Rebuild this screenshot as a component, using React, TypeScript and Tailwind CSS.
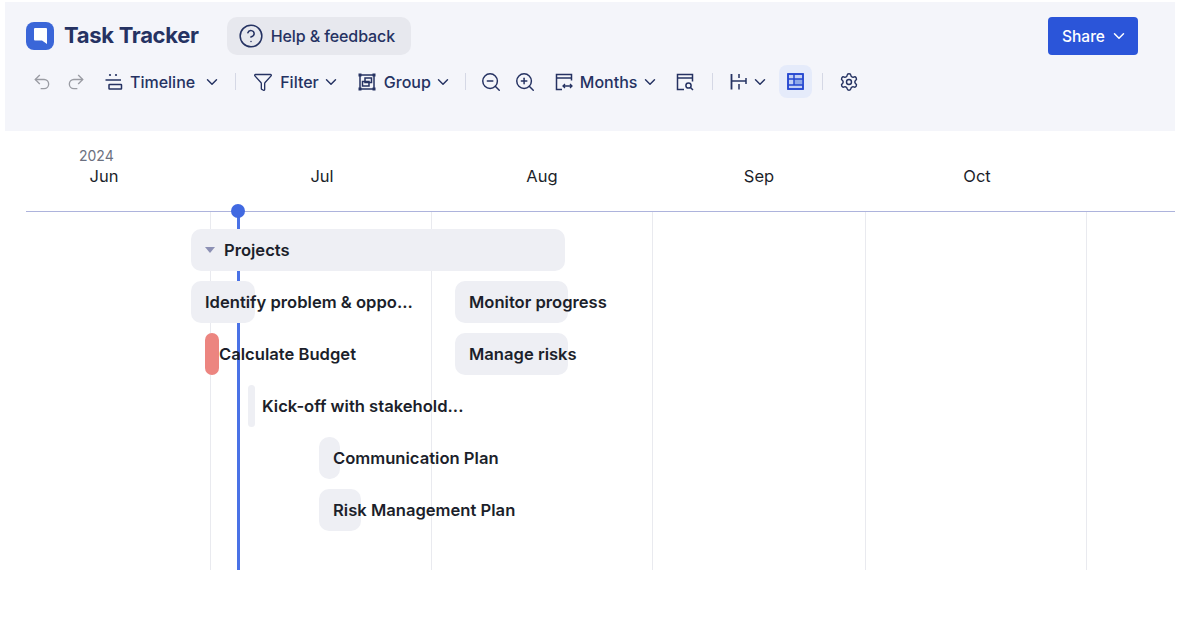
import { ChevronDown, CircleHelp, Funnel, Redo2, Settings, Undo2, ZoomIn, ZoomOut } from 'lucide-react';

const navy = 'text-[#253262]';

function TimelineIcon() {
  return (
    <svg width="18" height="18" viewBox="0 0 18 18" fill="none" stroke="currentColor" strokeWidth="1.5">
      <circle cx="5" cy="2" r="1.1" fill="currentColor" stroke="none" />
      <circle cx="11" cy="2" r="1.1" fill="currentColor" stroke="none" />
      <path d="M0.5 7h15.5" />
      <rect x="4" y="11.5" width="12.5" height="4.5" rx="0.5" />
    </svg>
  );
}

function GroupIcon() {
  return (
    <svg width="18" height="18" viewBox="0 0 18 18" fill="none" stroke="currentColor" strokeWidth="1.5">
      <rect x="2" y="2" width="14" height="14" />
      <rect x="7" y="5" width="6.5" height="4.5" />
      <rect x="4.5" y="8.5" width="6.5" height="4.5" />
      <g fill="currentColor" stroke="none">
        <rect x="0.5" y="0.5" width="3" height="3" />
        <rect x="14.5" y="0.5" width="3" height="3" />
        <rect x="0.5" y="14.5" width="3" height="3" />
        <rect x="14.5" y="14.5" width="3" height="3" />
      </g>
    </svg>
  );
}

function MonthsIcon() {
  return (
    <svg width="18" height="18" viewBox="0 0 18 18" fill="none" stroke="currentColor" strokeWidth="1.5">
      <path d="M7 16.5H1.5V1.5h15v6" />
      <path d="M1.5 5h15" />
      <path d="M8 13h9M10 11l-2 2 2 2M15 11l2 2-2 2" strokeWidth="1.3" />
    </svg>
  );
}

function CalendarSearchIcon() {
  return (
    <svg width="18" height="18" viewBox="0 0 18 18" fill="none" stroke="currentColor" strokeWidth="1.5">
      <path d="M8 16.5H1.5V1.5h15v7" />
      <path d="M1.5 5h15" />
      <circle cx="12.5" cy="12.5" r="2.6" />
      <path d="M14.5 14.5l2.5 2.5" />
    </svg>
  );
}

function ColumnsIcon() {
  return (
    <svg width="18" height="18" viewBox="0 0 18 18" fill="none" stroke="currentColor" strokeWidth="1.5">
      <path d="M1.5 1v15.5" strokeWidth="1.8" />
      <path d="M1.5 8h14.5" />
      <path d="M9 1v4M9 11v5.5" />
      <path d="M16 5v6" />
    </svg>
  );
}

function TableIcon() {
  return (
    <svg width="17" height="17" viewBox="0 0 17 17" fill="none">
      <rect x="1" y="1" width="15" height="15" fill="#c3d0f5" stroke="#2447d0" strokeWidth="1.5" />
      <rect x="7" y="6" width="9" height="6" fill="#8fa8e8" />
      <path d="M1 6h15M1 12h15M7 1v11" stroke="#2447d0" strokeWidth="1.5" />
      <rect x="1" y="1" width="15" height="15" stroke="#2447d0" strokeWidth="1.5" />
    </svg>
  );
}

function Divider() {
  return <div className="h-[17px] w-px bg-[#d5d8e5]" />;
}

function Bar({ left, top, width, color = 'bg-[#eeeff4]', label, textLeft }: {
  left: number;
  top: number;
  width: number;
  color?: string;
  label: string;
  textLeft: number;
}) {
  return (
    <>
      <div className={`absolute h-[42px] rounded-[10px] ${color}`} style={{ left, top, width }} />
      <div className="absolute flex h-[42px] items-center whitespace-nowrap text-[16.6px] font-semibold text-[#1c1f2b]" style={{ left: textLeft, top }}>
        {label}
      </div>
    </>
  );
}

const months = [
  { name: 'Jun', x: 104 },
  { name: 'Jul', x: 322 },
  { name: 'Aug', x: 542 },
  { name: 'Sep', x: 759 },
  { name: 'Oct', x: 977 },
];

const gridLines = [210, 431, 652, 865, 1086];

export default function App() {
  return (
    <div className="relative h-[624px] w-[1182px] overflow-hidden bg-white font-['Inter',sans-serif]">
      {/* Header */}
      <div className="ml-[5px] mt-[2px] h-[129px] w-[1170px] bg-[#f4f5fa] pl-[21px] pr-[37px] pt-[15px]">
        <div className="flex h-[38px] items-center justify-between">
          <div className="flex items-center">
            <div className="flex h-[28px] w-[28px] items-center justify-center rounded-[8px] bg-[#3a66d8]">
              <svg width="13" height="16" viewBox="0 0 13 16" fill="white">
                <path d="M1 0h11a1 1 0 0 1 1 1v15l-5-3.5H1a1 1 0 0 1-1-1V1a1 1 0 0 1 1-1z" />
              </svg>
            </div>
            <span className={`ml-[10px] pb-[1px] text-[22px] font-bold tracking-[-0.3px] ${navy}`}>Task Tracker</span>
            <div className={`ml-[28px] flex h-[38px] w-[184px] items-center rounded-[10px] bg-[#e7e8ee] pl-[11px] text-[16px] font-medium tracking-[-0.1px] ${navy}`}>
              <CircleHelp size={26} strokeWidth={1.4} />
              <span className="ml-[7px]">Help &amp; feedback</span>
            </div>
          </div>
          <div className="flex h-[38px] w-[90px] items-center rounded-[4px] bg-[#2b55d9] pl-[14px] text-[15.5px] font-medium text-white">
            <span className="pt-[1px]">Share</span>
            <ChevronDown size={18} strokeWidth={2} className="ml-[5px]" />
          </div>
        </div>

        <div className={`mt-[10px] flex h-[33px] items-center text-[16px] font-medium ${navy}`}>
          <Undo2 size={20} strokeWidth={1.6} className="ml-[6px] text-[#9a9ca3]" />
          <Redo2 size={20} strokeWidth={1.6} className="ml-[14px] text-[#9a9ca3]" />
          <div className="ml-[19px]"><TimelineIcon /></div>
          <span className="ml-[7px]">Timeline</span>
          <ChevronDown size={18} strokeWidth={1.9} className="ml-[8px]" />
          <div className="ml-[14px]"><Divider /></div>
          <Funnel size={20} strokeWidth={1.6} className="ml-[17px]" />
          <span className="ml-[7px]">Filter</span>
          <ChevronDown size={18} strokeWidth={1.9} className="ml-[3px]" />
          <div className="ml-[18px]"><GroupIcon /></div>
          <span className="ml-[8px]">Group</span>
          <ChevronDown size={18} strokeWidth={1.9} className="ml-[3px]" />
          <div className="ml-[13px]"><Divider /></div>
          <ZoomOut size={22} strokeWidth={1.6} className="ml-[14px]" />
          <ZoomIn size={22} strokeWidth={1.6} className="ml-[12px]" />
          <div className="ml-[19px]"><MonthsIcon /></div>
          <span className="ml-[7px]">Months</span>
          <ChevronDown size={18} strokeWidth={1.9} className="ml-[4px]" />
          <div className="ml-[17px]"><CalendarSearchIcon /></div>
          <div className="ml-[18px]"><Divider /></div>
          <div className="ml-[17px]"><ColumnsIcon /></div>
          <ChevronDown size={18} strokeWidth={1.9} className="ml-[3px]" />
          <div className="ml-[10px] flex h-[33px] w-[33px] items-center justify-center rounded-[8px] bg-[#e5ebfa]">
            <TableIcon />
          </div>
          <div className="ml-[10px]"><Divider /></div>
          <Settings size={20} strokeWidth={1.7} className="ml-[16px]" />
        </div>
      </div>

      {/* Timeline canvas */}
      <div className="absolute inset-0 top-[131px]">
        <div className="absolute left-[79px] top-[16px] text-[14px] leading-[17px] text-[#6b7080]">2024</div>
        {months.map((m) => (
          <div key={m.name} className="absolute top-[35px] -translate-x-1/2 text-[16.5px] leading-[20px] text-[#1c1f2b]" style={{ left: m.x }}>
            {m.name}
          </div>
        ))}
        <div className="absolute left-[26px] right-[7px] top-[80px] h-px bg-[#adb3dc]" />
        {gridLines.map((x) => (
          <div key={x} className="absolute top-[81px] h-[358px] w-px bg-[#e9eaef]" style={{ left: x }} />
        ))}
        <div className="absolute left-[237px] top-[80px] h-[359px] w-[2.5px] bg-[#4a72e6]" />
        <div className="absolute left-[231px] top-[73px] h-[14px] w-[14px] rounded-full bg-[#4169e1]" />
      </div>

      <div className="absolute inset-0 top-0">
        <Bar left={191} top={229} width={374} label="Projects" textLeft={224} />
        <div className="absolute left-[205px] top-[247px] h-0 w-0 border-x-[5px] border-t-[6px] border-x-transparent border-t-[#8c90b4]" />
        <Bar left={191} top={281} width={64} label="Identify problem & oppo..." textLeft={205} />
        <Bar left={455} top={281} width={113} label="Monitor progress" textLeft={469} />
        <Bar left={205} top={333} width={14} color="bg-[#ec8580]" label="Calculate Budget" textLeft={219} />
        <Bar left={455} top={333} width={113} label="Manage risks" textLeft={469} />
        <Bar left={248} top={385} width={7} label="Kick-off with stakehold..." textLeft={262} />
        <Bar left={319} top={437} width={21} label="Communication Plan" textLeft={333} />
        <Bar left={319} top={489} width={42} label="Risk Management Plan" textLeft={333} />
      </div>
    </div>
  );
}
